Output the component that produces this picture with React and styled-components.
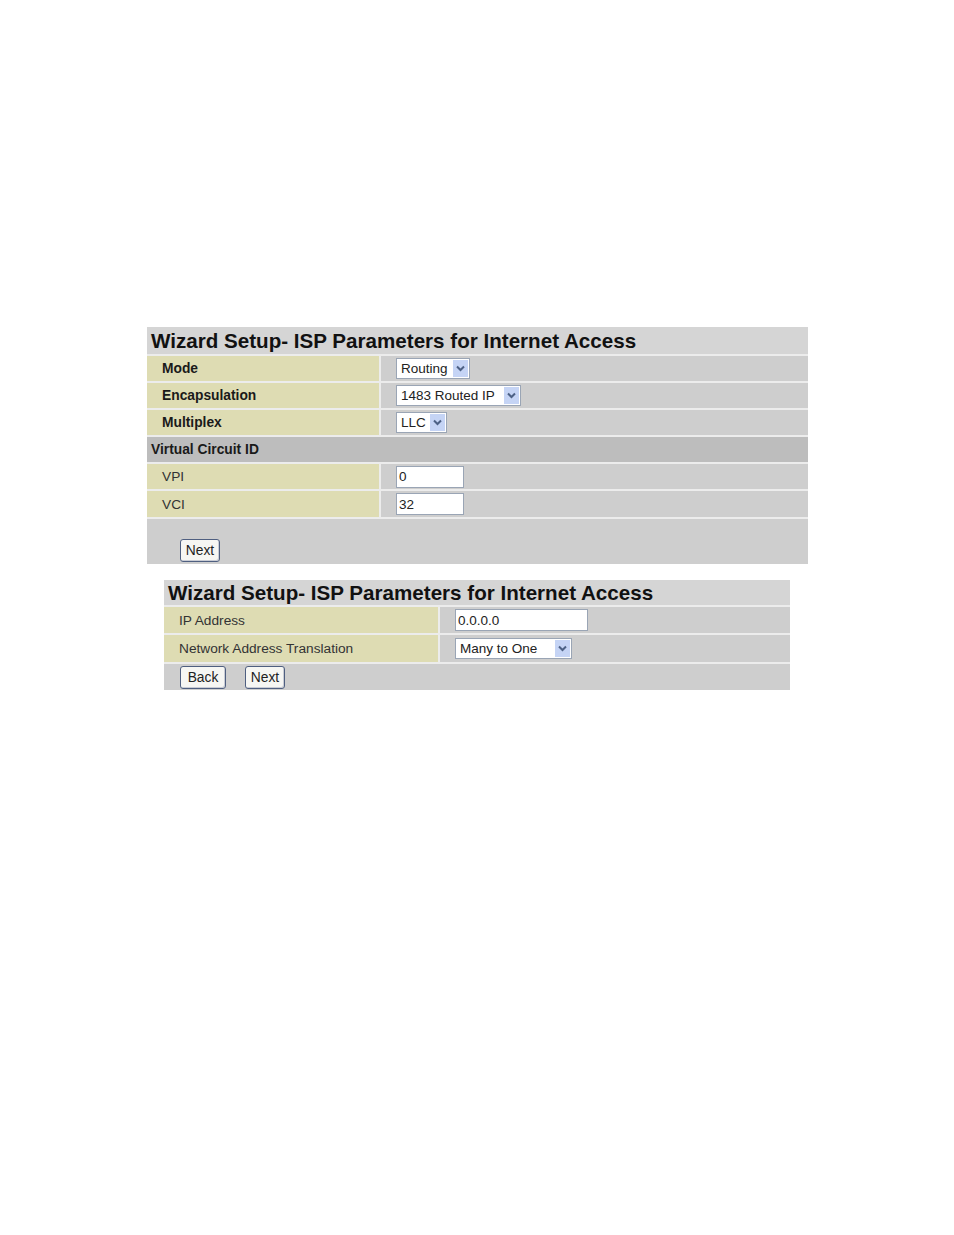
import React from "react";
import styled, { createGlobalStyle } from "styled-components";

const GlobalStyle = createGlobalStyle`
  html, body {
    margin: 0;
    padding: 0;
    background: #ffffff;
    font-family: "Liberation Sans", Arial, sans-serif;
  }
`;

const Chevron = () => (
  <svg width="9" height="7" viewBox="0 0 9 7">
    <path d="M1 1.5 L4.5 5 L8 1.5" fill="none" stroke="#4d6185" strokeWidth="2" />
  </svg>
);

const Dropdown = ({ value, width }) => (
  <SelectBox $width={width}>
    <SelectText>{value}</SelectText>
    <ArrowBox>
      <Chevron />
    </ArrowBox>
  </SelectBox>
);

const App = () => (
  <>
    <GlobalStyle />
    <Page>
      <Panel $width={661}>
        <Title $height={27}>Wizard Setup- ISP Parameters for Internet Access</Title>
        <Row $label={232}>
          <Label $bold>Mode</Label>
          <Value>
            <Dropdown value="Routing" width={74} />
          </Value>
        </Row>
        <Row $label={232}>
          <Label $bold>Encapsulation</Label>
          <Value>
            <Dropdown value="1483 Routed IP" width={125} />
          </Value>
        </Row>
        <Row $label={232}>
          <Label $bold>Multiplex</Label>
          <Value>
            <Dropdown value="LLC" width={51} />
          </Value>
        </Row>
        <SectionRow>Virtual Circuit ID</SectionRow>
        <Row $label={232}>
          <Label>VPI</Label>
          <Value>
            <TextInput $width={68}>0</TextInput>
          </Value>
        </Row>
        <Row $label={232} $height={26}>
          <Label>VCI</Label>
          <Value>
            <TextInput $width={68}>32</TextInput>
          </Value>
        </Row>
        <ButtonBar $height={45} $bottom={2} $left={33}>
          <Button $width={40}>Next</Button>
        </ButtonBar>
      </Panel>

      <Panel $width={626} $indent={17}>
        <Title $height={25}>Wizard Setup- ISP Parameters for Internet Access</Title>
        <Row $label={274} $height={26}>
          <Label>IP Address</Label>
          <Value>
            <TextInput $width={133}>0.0.0.0</TextInput>
          </Value>
        </Row>
        <Row $label={274} $height={27}>
          <Label>Network Address Translation</Label>
          <Value>
            <Dropdown value="Many to One" width={117} />
          </Value>
        </Row>
        <ButtonBar $height={26} $bottom={1} $left={16}>
          <Button $width={46}>Back</Button>
          <Button $width={40}>Next</Button>
        </ButtonBar>
      </Panel>
    </Page>
  </>
);

const Page = styled.div`
  padding: 327px 0 0 147px;
  display: flex;
  flex-direction: column;
  gap: 16px;
`;

const Panel = styled.div`
  width: ${(p) => p.$width}px;
  margin-left: ${(p) => p.$indent || 0}px;
  display: flex;
  flex-direction: column;
  gap: 2px;
  background: #ececec;
`;

const Title = styled.div`
  height: ${(p) => p.$height}px;
  background: #d5d5d5;
  display: flex;
  align-items: center;
  padding-left: 4px;
  font-size: 20.6px;
  font-weight: bold;
  color: #111;
  white-space: nowrap;
`;

const Row = styled.div`
  height: ${(p) => p.$height || 25}px;
  display: grid;
  grid-template-columns: ${(p) => p.$label}px 1fr;
  column-gap: 2px;
`;

const Label = styled.div`
  background: #dedcb3;
  display: flex;
  align-items: center;
  padding-left: 15px;
  font-size: ${(p) => (p.$bold ? "13.8px" : "13.7px")};
  font-weight: ${(p) => (p.$bold ? "bold" : "normal")};
  color: ${(p) => (p.$bold ? "#1a1a1a" : "#333")};
`;

const Value = styled.div`
  background: #cecece;
  display: flex;
  align-items: center;
  padding-left: 15px;
`;

const SectionRow = styled.div`
  height: 25px;
  background: #bdbdbd;
  display: flex;
  align-items: center;
  padding-left: 4px;
  font-size: 13.8px;
  font-weight: bold;
  color: #1a1a1a;
`;

const SelectBox = styled.div`
  width: ${(p) => p.$width}px;
  height: 21px;
  box-sizing: border-box;
  background: #fff;
  border: 1px solid #9aa5b5;
  display: flex;
  align-items: stretch;
  justify-content: space-between;
  padding: 1px;
`;

const SelectText = styled.span`
  display: flex;
  align-items: center;
  padding-left: 3px;
  font-size: 13.5px;
  color: #222;
  white-space: nowrap;
`;

const ArrowBox = styled.span`
  width: 15px;
  background: #c5d4f5;
  display: flex;
  align-items: center;
  justify-content: center;
`;

const TextInput = styled.div`
  width: ${(p) => p.$width}px;
  height: 22px;
  box-sizing: border-box;
  background: #fff;
  border: 1px solid #9aa5b5;
  display: flex;
  align-items: center;
  padding-left: 2px;
  font-size: 13.5px;
  color: #222;
`;

const ButtonBar = styled.div`
  height: ${(p) => p.$height}px;
  box-sizing: border-box;
  background: #cecece;
  display: flex;
  align-items: flex-end;
  gap: 19px;
  padding: 0 0 ${(p) => p.$bottom}px ${(p) => p.$left}px;
`;

const Button = styled.div`
  width: ${(p) => p.$width}px;
  height: 23px;
  box-sizing: border-box;
  background: #f6f6f3;
  border: 1px solid #4f5f80;
  border-radius: 3px;
  box-shadow: inset -1px -1px 0 #c9ccd4;
  display: flex;
  align-items: center;
  justify-content: center;
  font-size: 13.8px;
  color: #222;
`;

export default App;
